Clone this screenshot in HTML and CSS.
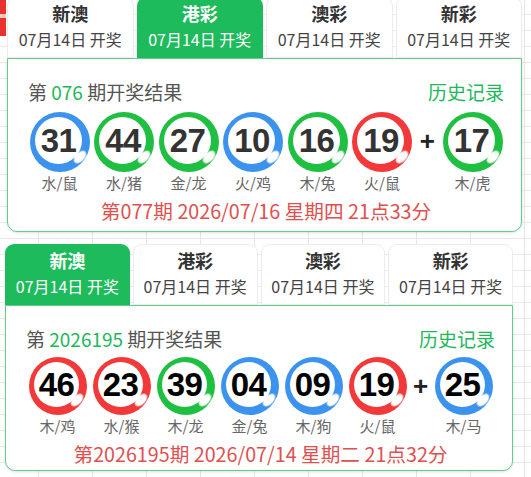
FILE: index.html
```html
<!DOCTYPE html>
<html lang="zh-CN">
<head>
<meta charset="utf-8">
<title>开奖结果</title>
<link rel="stylesheet" href="styles.css">
</head>
<body>
<div class="deco"></div>

<section class="lottery s1">
  <div class="tabs">
    <div class="tab"><div class="tname">新澳</div><div class="tdate">07月14日 开奖</div></div>
    <div class="tab active"><div class="tname">港彩</div><div class="tdate">07月14日 开奖</div></div>
    <div class="tab"><div class="tname">澳彩</div><div class="tdate">07月14日 开奖</div></div>
    <div class="tab"><div class="tname">新彩</div><div class="tdate">07月14日 开奖</div></div>
  </div>
  <div class="panel">
    <div class="head">
      <div class="title">第 <span class="issue">076</span> 期开奖结果</div>
      <a class="hist">历史记录</a>
    </div>
    <div class="balls">
      <div class="item"><div class="ball blue"><span>31</span></div><div class="zodiac">水/鼠</div></div>
      <div class="item"><div class="ball green"><span>44</span></div><div class="zodiac">水/猪</div></div>
      <div class="item"><div class="ball green"><span>27</span></div><div class="zodiac">金/龙</div></div>
      <div class="item"><div class="ball blue"><span>10</span></div><div class="zodiac">火/鸡</div></div>
      <div class="item"><div class="ball green"><span>16</span></div><div class="zodiac">木/兔</div></div>
      <div class="item"><div class="ball red"><span>19</span></div><div class="zodiac">火/鼠</div></div>
      <div class="plus">+</div>
      <div class="item"><div class="ball green"><span>17</span></div><div class="zodiac">木/虎</div></div>
    </div>
    <div class="time">第077期 2026/07/16 星期四 21点33分</div>
  </div>
</section>

<section class="lottery s2">
  <div class="tabs">
    <div class="tab active"><div class="tname">新澳</div><div class="tdate">07月14日 开奖</div></div>
    <div class="tab"><div class="tname">港彩</div><div class="tdate">07月14日 开奖</div></div>
    <div class="tab"><div class="tname">澳彩</div><div class="tdate">07月14日 开奖</div></div>
    <div class="tab"><div class="tname">新彩</div><div class="tdate">07月14日 开奖</div></div>
  </div>
  <div class="panel">
    <div class="head">
      <div class="title">第 <span class="issue">2026195</span> 期开奖结果</div>
      <a class="hist">历史记录</a>
    </div>
    <div class="balls">
      <div class="item"><div class="ball red"><span>46</span></div><div class="zodiac">木/鸡</div></div>
      <div class="item"><div class="ball red"><span>23</span></div><div class="zodiac">水/猴</div></div>
      <div class="item"><div class="ball green"><span>39</span></div><div class="zodiac">木/龙</div></div>
      <div class="item"><div class="ball blue"><span>04</span></div><div class="zodiac">金/兔</div></div>
      <div class="item"><div class="ball blue"><span>09</span></div><div class="zodiac">木/狗</div></div>
      <div class="item"><div class="ball red"><span>19</span></div><div class="zodiac">火/鼠</div></div>
      <div class="plus">+</div>
      <div class="item"><div class="ball blue"><span>25</span></div><div class="zodiac">木/马</div></div>
    </div>
    <div class="time">第2026195期 2026/07/14 星期二 21点32分</div>
  </div>
</section>
</body>
</html>
```

FILE: styles.css
```css
html, body {
  margin: 0;
  padding: 0;
}
body {
  width: 531px;
  height: 477px;
  overflow: hidden;
  position: relative;
  font-family: "Noto Sans CJK SC", "Noto Sans", sans-serif;
  background-color: #ffffff;
  background-image:
    linear-gradient(to right, #ece4e4 1px, transparent 1px),
    linear-gradient(to bottom, #f1e6e6 1px, transparent 1px);
  background-size: 54px 16px;
  background-position: 38px 14px;
}
.deco {
  position: absolute;
  left: 0;
  top: 0;
  width: 6px;
  height: 36px;
  background: linear-gradient(to bottom, #e8322f 0 40%, #f7c6c6 40% 50%, #e8322f 50% 100%);
}
.lottery {
  position: relative;
}
.s1 {
  margin: -3px 0 0 7px;
  width: 515px;
}
.s2 {
  margin: 12px 0 0 5px;
  width: 508px;
}
.tabs {
  display: flex;
  gap: 3px;
}
.tab {
  flex: 1;
  height: 61px;
  box-sizing: border-box;
  padding-top: 4px;
  text-align: center;
  background: #ffffff;
  border-radius: 9px 9px 0 0;
  box-shadow: inset 0 0 0 1px #ececec;
  color: #333;
}
.tab.active {
  background: #1dbb5b;
  color: #ffffff;
  box-shadow: none;
}
.tname {
  font-size: 18px;
  font-weight: 700;
  line-height: 24px;
}
.tdate {
  font-size: 16px;
  line-height: 22px;
  margin-top: 3px;
  color: #444;
}
.tab.active .tdate {
  color: #ffffff;
}
.panel {
  background: #ffffff;
  border: 1px solid #5fcf8c;
  border-radius: 0 0 10px 10px;
  box-shadow: 0 1px 3px rgba(0, 0, 0, 0.12);
  padding: 21px 17px 8px 20px;
}
.s2 .panel {
  padding-bottom: 4px;
}
.head {
  display: flex;
  justify-content: space-between;
  align-items: center;
  height: 24px;
}
.title {
  font-size: 19px;
  color: #555;
  line-height: 24px;
}
.issue {
  color: #1db85a;
}
.hist {
  font-size: 19px;
  color: #1db85a;
  line-height: 24px;
}
.balls {
  display: flex;
  justify-content: center;
  align-items: flex-start;
  gap: 4.5px;
  margin-top: 8px;
}
.s2 .balls {
  gap: 6px;
  margin-top: 6px;
}
.item {
  display: flex;
  flex-direction: column;
  align-items: center;
}
.ball {
  position: relative;
  width: 60px;
  height: 60px;
  border-radius: 50%;
  box-sizing: border-box;
}
.s2 .ball {
  width: 58px;
  height: 58px;
}
.ball::before {
  content: "";
  position: absolute;
  left: 5px;
  top: 5px;
  right: 8px;
  bottom: 8px;
  border-radius: 50%;
  background: #ffffff;
}
.ball::after {
  content: "";
  position: absolute;
  right: 3px;
  bottom: 11px;
  width: 14px;
  height: 8px;
  border-radius: 50%;
  background: #ffffff;
  box-shadow: 0 0 0 1px rgba(255, 255, 255, 0.45);
  transform: rotate(-45deg);
}
.ball span {
  position: absolute;
  left: 0;
  right: 2px;
  top: 0;
  bottom: 2px;
  display: flex;
  align-items: center;
  justify-content: center;
  z-index: 1;
  font-family: "Liberation Sans", Arial, sans-serif;
  font-weight: 700;
  font-size: 33px;
  letter-spacing: -0.5px;
  color: #333;
}
.s2 .ball span {
  color: #000;
}
.blue { background: #3b93ee; }
.green { background: #1fc041; }
.red { background: #f23838; }
.zodiac {
  font-size: 15px;
  line-height: 22px;
  color: #666;
}
.plus {
  width: 21.5px;
  height: 60px;
  line-height: 58px;
  text-align: center;
  font-family: "Liberation Sans", Arial, sans-serif;
  font-weight: 700;
  font-size: 26px;
  color: #222;
}
.s2 .plus {
  width: 16px;
  height: 58px;
  line-height: 58px;
}
.time {
  margin-top: 5px;
  text-align: center;
  font-size: 19.7px;
  line-height: 24px;
  color: #e0504f;
}
```
